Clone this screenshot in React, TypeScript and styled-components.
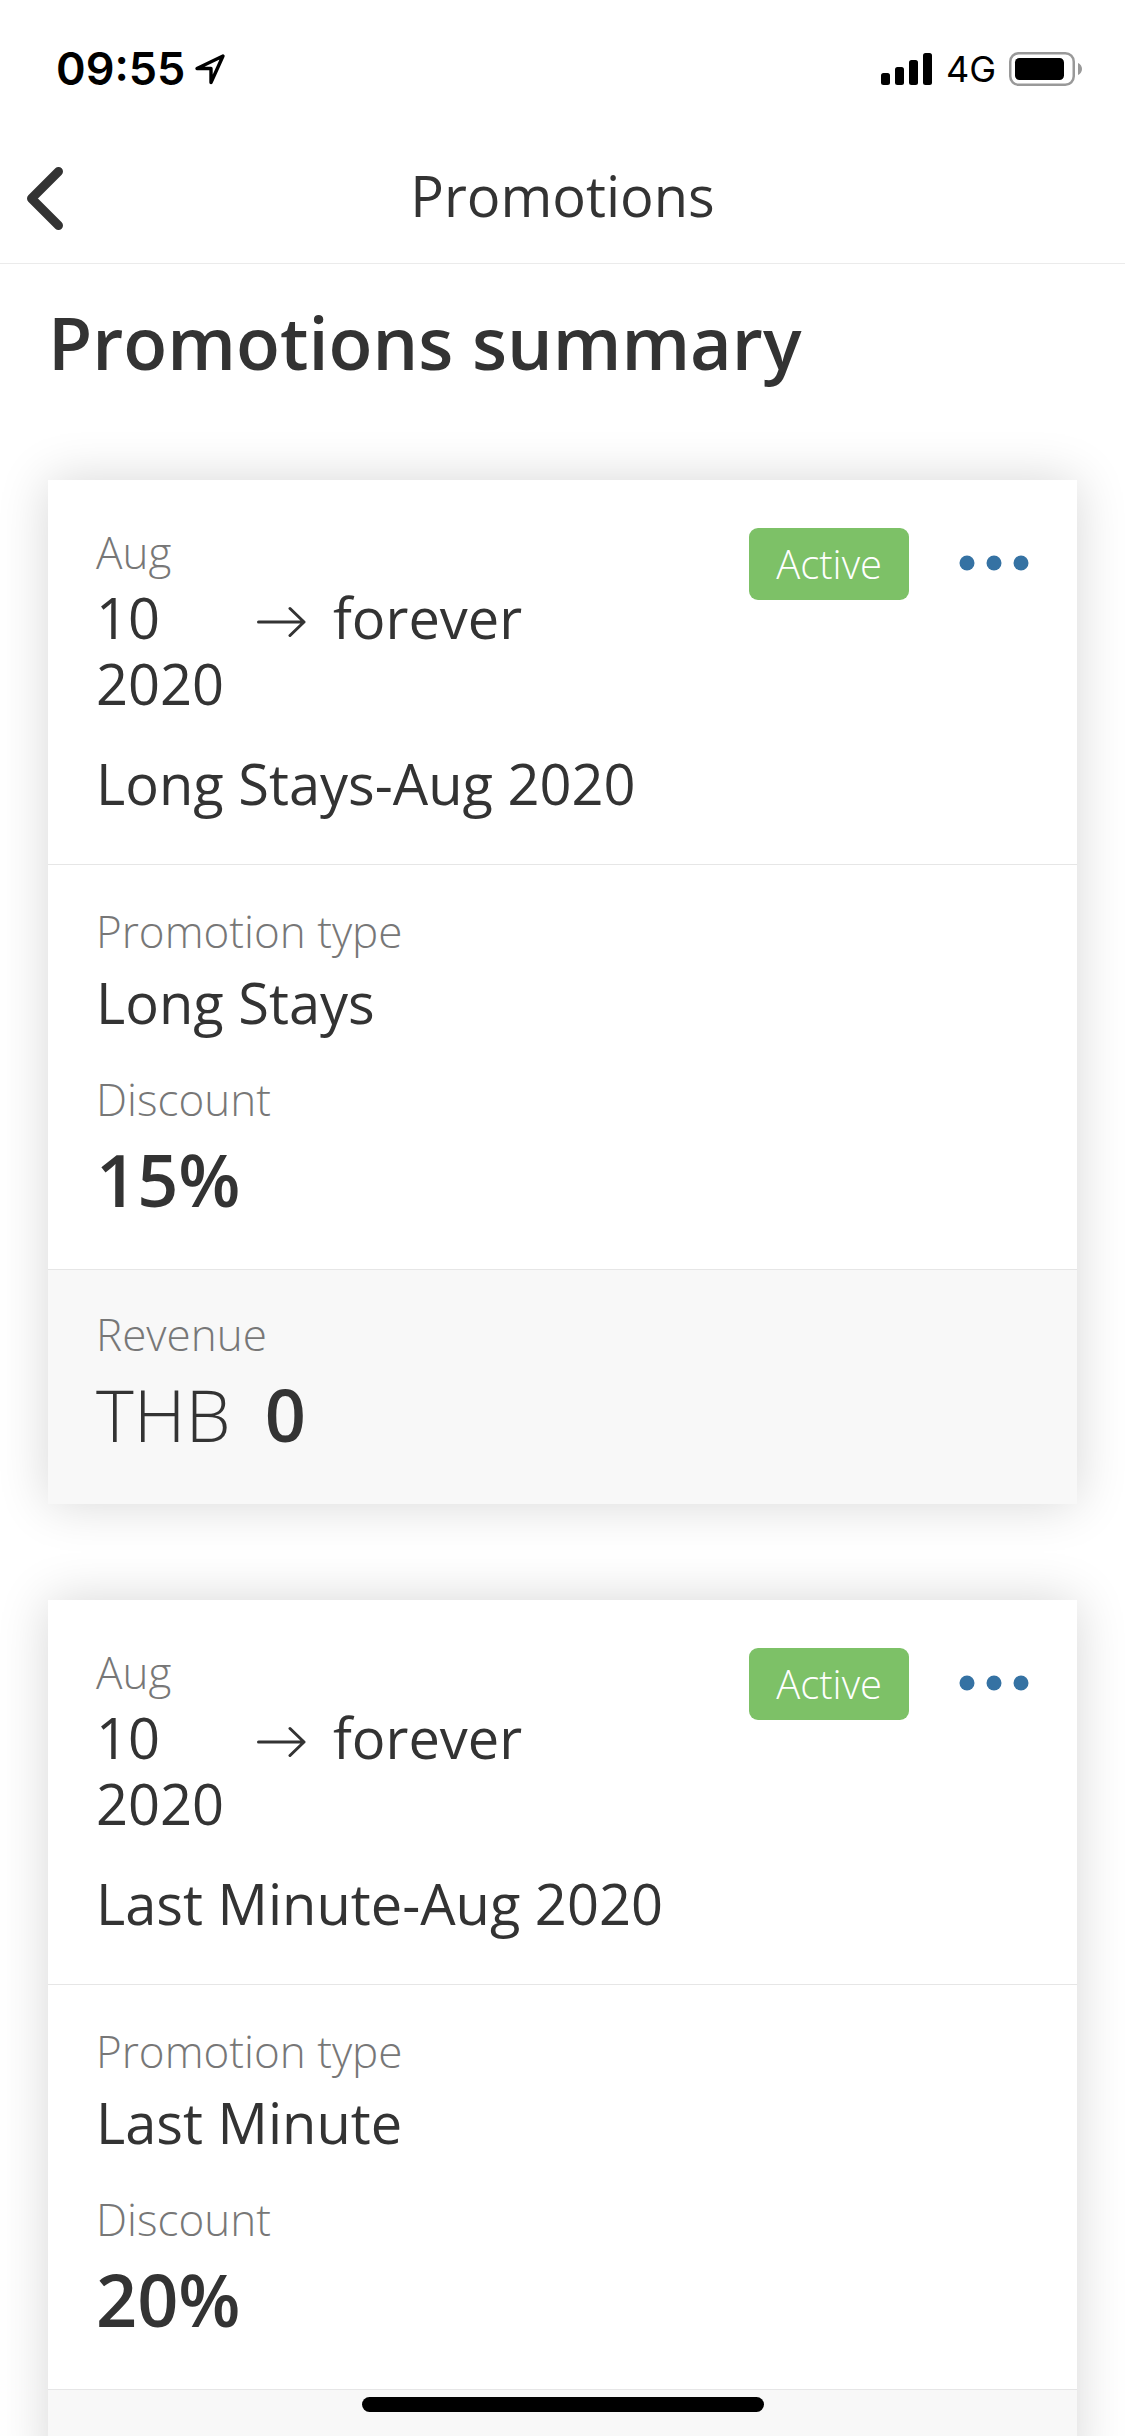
import React from "react";
import styled, { createGlobalStyle } from "styled-components";

const GlobalStyle = createGlobalStyle`
  *, *::before, *::after { box-sizing: border-box; }
  body { margin: 0; background: #fff; }
  h1, h2, p, dl, dd { margin: 0; }
  button { appearance: none; border: 0; padding: 0; background: none; cursor: pointer; }
`;

const Shell = styled.div`
  display: flex;
  flex-direction: column;
  height: 100vh;
  background: #fff;
  color: #333;
  font-family: "Open Sans", "Noto Sans", sans-serif;
`;

const StatusBar = styled.div`
  display: flex;
  align-items: center;
  justify-content: space-between;
  flex: none;
  height: 130px;
  padding: 8px 42px 0 56px;
  color: #000;
  font-family: Inter, "Liberation Sans", sans-serif;
`;

const StatusGroup = styled.div<{ $gap: number }>`
  display: flex;
  align-items: center;
  gap: ${(p) => p.$gap}px;
`;

const Clock = styled.time`
  font-size: 45px;
  font-weight: 600;
  line-height: 56px;
`;

const Network = styled.span`
  font-size: 36px;
  font-weight: 400;
  line-height: 44px;
`;

const NavBar = styled.header`
  display: grid;
  grid-template-columns: 96px 1fr 96px;
  align-items: center;
  flex: none;
  height: 134px;
  border-bottom: 1px solid #ebebeb;
`;

const BackButton = styled.button`
  display: flex;
  padding-left: 24px;
  color: #333;
`;

const NavTitle = styled.p`
  padding-bottom: 4px;
  text-align: center;
  font-size: 56px;
  font-weight: 400;
  line-height: 66px;
`;

const Content = styled.main`
  flex: 1;
  min-height: 0;
  overflow-y: auto;
  scrollbar-width: none;
  padding: 36px 48px 96px;
`;

const PageTitle = styled.h1`
  margin-bottom: 96px;
  font-size: 72px;
  font-weight: 600;
  line-height: 84px;
`;

const CardList = styled.div`
  display: flex;
  flex-direction: column;
  gap: 96px;
`;

const Card = styled.article`
  background: #fff;
  box-shadow: 0 0 48px rgba(0, 0, 0, 0.16);
`;

const CardHead = styled.div`
  display: flex;
  justify-content: space-between;
  align-items: flex-start;
  padding: 48px;
`;

const Details = styled.dl`
  display: flex;
  flex-direction: column;
  gap: 40px;
  padding: 42px 48px 48px;
  border-top: 1px solid #e6e6e6;
`;

const RevenuePanel = styled(Details)`
  padding-top: 40px;
  background: #f8f8f8;
`;

const Field = styled.div`
  display: flex;
  flex-direction: column;
  gap: 14px;
`;

const Label = styled.dt`
  color: #777;
  font-size: 44px;
  font-weight: 300;
  line-height: 48px;
`;

const Value = styled.dd`
  font-size: 56px;
  font-weight: 500;
  line-height: 66px;
`;

const Figure = styled.dd`
  display: flex;
  gap: 34px;
  font-size: 72px;
  font-weight: 600;
  line-height: 84px;
`;

const Currency = styled.span`
  font-weight: 300;
`;

const Month = styled.p`
  margin-bottom: 8px;
  color: #777;
  font-size: 44px;
  font-weight: 300;
  line-height: 48px;
`;

const Period = styled.div`
  display: flex;
  align-items: flex-start;
  margin-bottom: 34px;
  font-size: 56px;
  font-weight: 500;
  line-height: 66px;
`;

const StartDate = styled.span`
  width: 160px;
`;

const ArrowIcon = styled.svg`
  margin-right: 27px;
`;

const PromotionName = styled.h2`
  font-size: 56px;
  font-weight: 500;
  line-height: 66px;
`;

const Actions = styled.div`
  display: flex;
  align-items: flex-start;
  gap: 48px;
`;

const Badge = styled.span`
  padding: 12px 27px;
  border-radius: 9px;
  background: #7dc167;
  color: #fff;
  font-size: 40px;
  font-weight: 300;
  line-height: 48px;
`;

const MoreButton = styled.button`
  display: flex;
  align-items: center;
  height: 70px;
  color: #3572a3;
`;

const HomeIndicator = styled.div`
  position: fixed;
  left: 50%;
  bottom: 24px;
  width: 402px;
  height: 15px;
  border-radius: 8px;
  background: #000;
  transform: translateX(-50%);
`;

type Promotion = {
  month: string;
  start: string;
  end: string;
  name: string;
  type: string;
  discount: string;
  revenue?: { currency: string; amount: string };
};

const promotions: Promotion[] = [
  {
    month: "Aug",
    start: "10 2020",
    end: "forever",
    name: "Long Stays-Aug 2020",
    type: "Long Stays",
    discount: "15%",
    revenue: { currency: "THB", amount: "0" },
  },
  {
    month: "Aug",
    start: "10 2020",
    end: "forever",
    name: "Last Minute-Aug 2020",
    type: "Last Minute",
    discount: "20%",
  },
];

function PromotionCard({ promotion }: { promotion: Promotion }) {
  return (
    <Card>
      <CardHead>
        <div>
          <Month>{promotion.month}</Month>
          <Period>
            <StartDate>{promotion.start}</StartDate>
            <ArrowIcon width="50" height="76" viewBox="0 0 50 76" fill="none" aria-hidden="true">
              <path
                d="M2.5 38H48M34 24.5L48 38L34 51.5"
                stroke="currentColor"
                strokeWidth="3"
                strokeLinecap="round"
                strokeLinejoin="round"
              />
            </ArrowIcon>
            <span>{promotion.end}</span>
          </Period>
          <PromotionName>{promotion.name}</PromotionName>
        </div>
        <Actions>
          <Badge>Active</Badge>
          <MoreButton type="button" aria-label="More actions">
            <svg width="72" height="16" viewBox="0 0 72 16" fill="currentColor" aria-hidden="true">
              <circle cx="10" cy="8" r="7.5" />
              <circle cx="37" cy="8" r="7.5" />
              <circle cx="64" cy="8" r="7.5" />
            </svg>
          </MoreButton>
        </Actions>
      </CardHead>
      <Details>
        <Field>
          <Label>Promotion type</Label>
          <Value>{promotion.type}</Value>
        </Field>
        <Field>
          <Label>Discount</Label>
          <Figure>{promotion.discount}</Figure>
        </Field>
      </Details>
      <RevenuePanel>
        {promotion.revenue && (
          <Field>
            <Label>Revenue</Label>
            <Figure>
              <Currency>{promotion.revenue.currency}</Currency>
              {promotion.revenue.amount}
            </Figure>
          </Field>
        )}
      </RevenuePanel>
    </Card>
  );
}

export default function App() {
  return (
    <Shell>
      <GlobalStyle />
      <StatusBar>
        <StatusGroup $gap={9}>
          <Clock>09:55</Clock>
          <svg width="32" height="32" viewBox="0 0 32 32" fill="none" aria-hidden="true">
            <path
              d="M29 3L3 15.5H17V29.5Z"
              stroke="currentColor"
              strokeWidth="3.4"
              strokeLinejoin="round"
            />
          </svg>
        </StatusGroup>
        <StatusGroup $gap={13}>
          <svg width="52" height="34" viewBox="0 0 52 34" fill="currentColor" aria-hidden="true">
            <rect x="0" y="21" width="9" height="12" rx="2.5" />
            <rect x="14" y="15" width="9" height="18" rx="2.5" />
            <rect x="28" y="8" width="9" height="25" rx="2.5" />
            <rect x="42" y="1" width="9" height="32" rx="2.5" />
          </svg>
          <Network>4G</Network>
          <svg width="74" height="34" viewBox="0 0 74 34" aria-hidden="true">
            <rect x="1.25" y="1.25" width="63.5" height="31.5" rx="8.5" fill="none" stroke="#999" strokeWidth="2.5" />
            <rect x="6" y="6" width="49" height="22" rx="4.5" fill="#000" />
            <path d="M69 11C71.6 12 73 14.5 73 17C73 19.5 71.6 22 69 23Z" fill="#999" />
          </svg>
        </StatusGroup>
      </StatusBar>
      <NavBar>
        <BackButton type="button" aria-label="Back">
          <svg width="42" height="66" viewBox="0 0 42 66" fill="none" aria-hidden="true">
            <path
              d="M34.5 7.5L7.5 34.5L34.5 61.5"
              stroke="currentColor"
              strokeWidth="9"
              strokeLinecap="round"
              strokeLinejoin="round"
            />
          </svg>
        </BackButton>
        <NavTitle>Promotions</NavTitle>
      </NavBar>
      <Content>
        <PageTitle>Promotions summary</PageTitle>
        <CardList>
          {promotions.map((promotion) => (
            <PromotionCard key={promotion.name} promotion={promotion} />
          ))}
        </CardList>
      </Content>
      <HomeIndicator />
    </Shell>
  );
}
